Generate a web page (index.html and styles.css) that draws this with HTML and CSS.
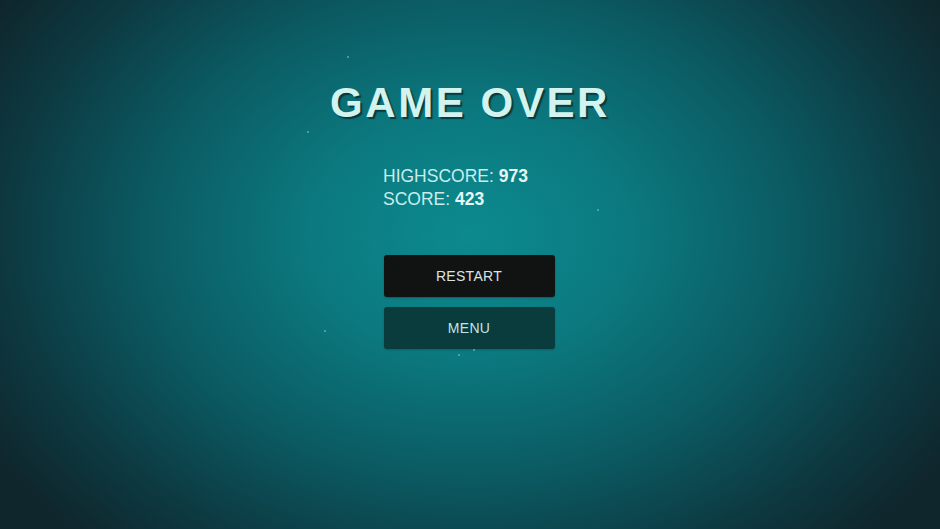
FILE: index.html
```html
<!DOCTYPE html>
<html lang="en">
<head>
<meta charset="utf-8">
<title>Game Over</title>
<link rel="stylesheet" href="styles.css">
</head>
<body>
<main class="screen">
  <span class="speck" style="left:347px;top:56px"></span>
  <span class="speck" style="left:307px;top:131px"></span>
  <span class="speck" style="left:597px;top:209px"></span>
  <span class="speck" style="left:324px;top:330px"></span>
  <span class="speck" style="left:458px;top:354px"></span>
  <span class="speck" style="left:473px;top:349px"></span>

  <h1 class="title">GAME OVER</h1>

  <section class="scores">
    <p class="score-line">HIGHSCORE: <b>973</b></p>
    <p class="score-line">SCORE: <b>423</b></p>
  </section>

  <nav class="actions">
    <button class="btn btn-restart">RESTART</button>
    <button class="btn btn-menu">MENU</button>
  </nav>
</main>
</body>
</html>
```

FILE: styles.css
```css
html, body {
  margin: 0;
  padding: 0;
  width: 940px;
  height: 529px;
  overflow: hidden;
}

.screen {
  position: relative;
  width: 940px;
  height: 529px;
  display: flex;
  flex-direction: column;
  align-items: center;
  font-family: "Liberation Sans", Arial, sans-serif;
  background:
    radial-gradient(ellipse 560px 420px at 470px 235px,
      #0c8a8e 0%,
      #0b7a80 28%,
      #0b5a62 58%,
      #0d3a42 82%,
      #0f262c 100%);
}

.speck {
  position: absolute;
  width: 2px;
  height: 2px;
  border-radius: 50%;
  background: rgba(150, 230, 230, 0.55);
}

.title {
  margin: 79px 0 0;
  font-size: 42px;
  font-weight: bold;
  letter-spacing: 2.6px;
  color: #d3f3ef;
  line-height: 48px;
  text-shadow: 2px 2px 1px rgba(5, 40, 45, 0.75);
}

.scores {
  margin-top: 38px;
  width: 176px;
  margin-left: 2px;
}

.score-line {
  margin: 0;
  font-size: 17.5px;
  line-height: 23px;
  color: #c9ecec;
}

.score-line b {
  color: #e4f7f6;
}

.actions {
  margin-top: 44px;
  margin-right: 2px;
  display: flex;
  flex-direction: column;
  gap: 10px;
}

.btn {
  width: 171px;
  height: 42px;
  border: none;
  border-radius: 3px;
  font-family: "Liberation Sans", Arial, sans-serif;
  font-size: 14px;
  letter-spacing: 0.3px;
  padding: 0;
}

.btn-restart {
  background: #111313;
  color: #d9e4e3;
  box-shadow: 0 1px 2px rgba(0, 0, 0, 0.25);
}

.btn-menu {
  background: #0a3b3d;
  color: #bfe6e4;
  box-shadow: 0 1px 2px rgba(0, 0, 0, 0.2);
}
```
